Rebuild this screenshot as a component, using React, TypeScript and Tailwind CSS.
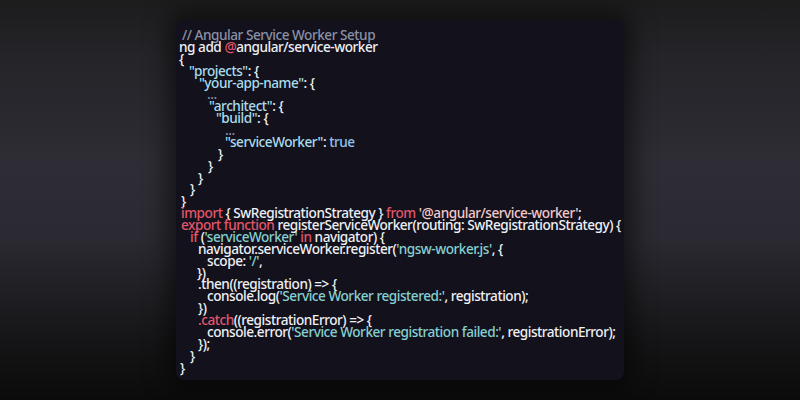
import * as React from "react";

type Tok = [string, string?];

const C = {
  txt: "text-[#eef0f4]",
  cm: "text-[#8a90a6]",
  kw: "text-[#e2566b]",
  key: "text-[#a9dcec]",
  str: "text-[#86cfd0]",
  imp: "text-[#f3c9c9]",
  bool: "text-[#8fc3ee]",
};

const lines: { pad: number; toks: Tok[] }[] = [
  { pad: 4, toks: [["// Angular Service Worker Setup", C.cm]] },
  { pad: 1, toks: [["ng add "], ["@", C.kw], ["angular/service-worker"]] },
  { pad: 1, toks: [["{"]] },
  { pad: 11, toks: [['"projects"', C.key], [": {"]] },
  { pad: 21, toks: [['"your-app-name"', C.key], [": {"]] },
  { pad: 29, toks: [["...", C.cm]] },
  { pad: 31, toks: [['"architect"', C.key], [": {"]] },
  { pad: 38, toks: [['"build"', C.key], [": {"]] },
  { pad: 47, toks: [["...", C.cm]] },
  { pad: 47, toks: [['"serviceWorker"', C.key], [": "], ["true", C.bool]] },
  { pad: 40, toks: [["}"]] },
  { pad: 30, toks: [["}"]] },
  { pad: 20, toks: [["}"]] },
  { pad: 12, toks: [["}"]] },
  { pad: 3, toks: [["}"]] },
  { pad: 3, toks: [["import", C.kw], [" { SwRegistrationStrategy } "], ["from", C.kw], [" "], ["'@angular/service-worker'", C.imp], [";"]] },
  { pad: 3, toks: [["export function", C.kw], [" registerServiceWorker(routing: SwRegistrationStrategy) {"]] },
  { pad: 12, toks: [["if", C.kw], [" ("], ["'serviceWorker'", C.str], [" "], ["in", C.kw], [" navigator) {"]] },
  { pad: 20, toks: [["navigator.serviceWorker.register("], ["'ngsw-worker.js'", C.str], [", {"]] },
  { pad: 29, toks: [["scope: "], ["'/'", C.str], [","]] },
  { pad: 19, toks: [["})"]] },
  { pad: 20, toks: [[".then((registration) => {"]] },
  { pad: 29, toks: [["console.log("], ["'Service Worker registered:'", C.str], [", registration);"]] },
  { pad: 20, toks: [["})"]] },
  { pad: 20, toks: [[".catch", C.kw], ["((registrationError) => {"]] },
  { pad: 29, toks: [["console.error("], ["'Service Worker registration failed:'", C.str], [", registrationError);"]] },
  { pad: 20, toks: [["});"]] },
  { pad: 12, toks: [["}"]] },
  { pad: 2, toks: [["}"]] },
];

export default function App() {
  return (
    <div className="flex h-[400px] w-[800px] items-start justify-center overflow-hidden bg-[linear-gradient(180deg,#1c1c1d_0%,#252429_14%,#2e2c34_40%,#2b2931_60%,#151517_85%,#0b0b0b_100%)] pt-[20px]">
      <div className="h-[360px] w-[448px] rounded-[8px] bg-[#13111c] pl-[2px] pt-[9px] shadow-[0_0_24px_8px_rgba(0,0,0,0.55)]">
        <pre className="font-['Noto_Sans',sans-serif] text-[13.6px] font-medium leading-[11.87px] tracking-[-0.47px] text-[#eef0f4]">
          {lines.map((l, i) => (
            <div key={i} style={{ paddingLeft: l.pad }} className="whitespace-pre">
              {l.toks.map(([t, c], j) => (
                <span key={j} className={c ?? C.txt}>
                  {t}
                </span>
              ))}
            </div>
          ))}
        </pre>
      </div>
    </div>
  );
}
